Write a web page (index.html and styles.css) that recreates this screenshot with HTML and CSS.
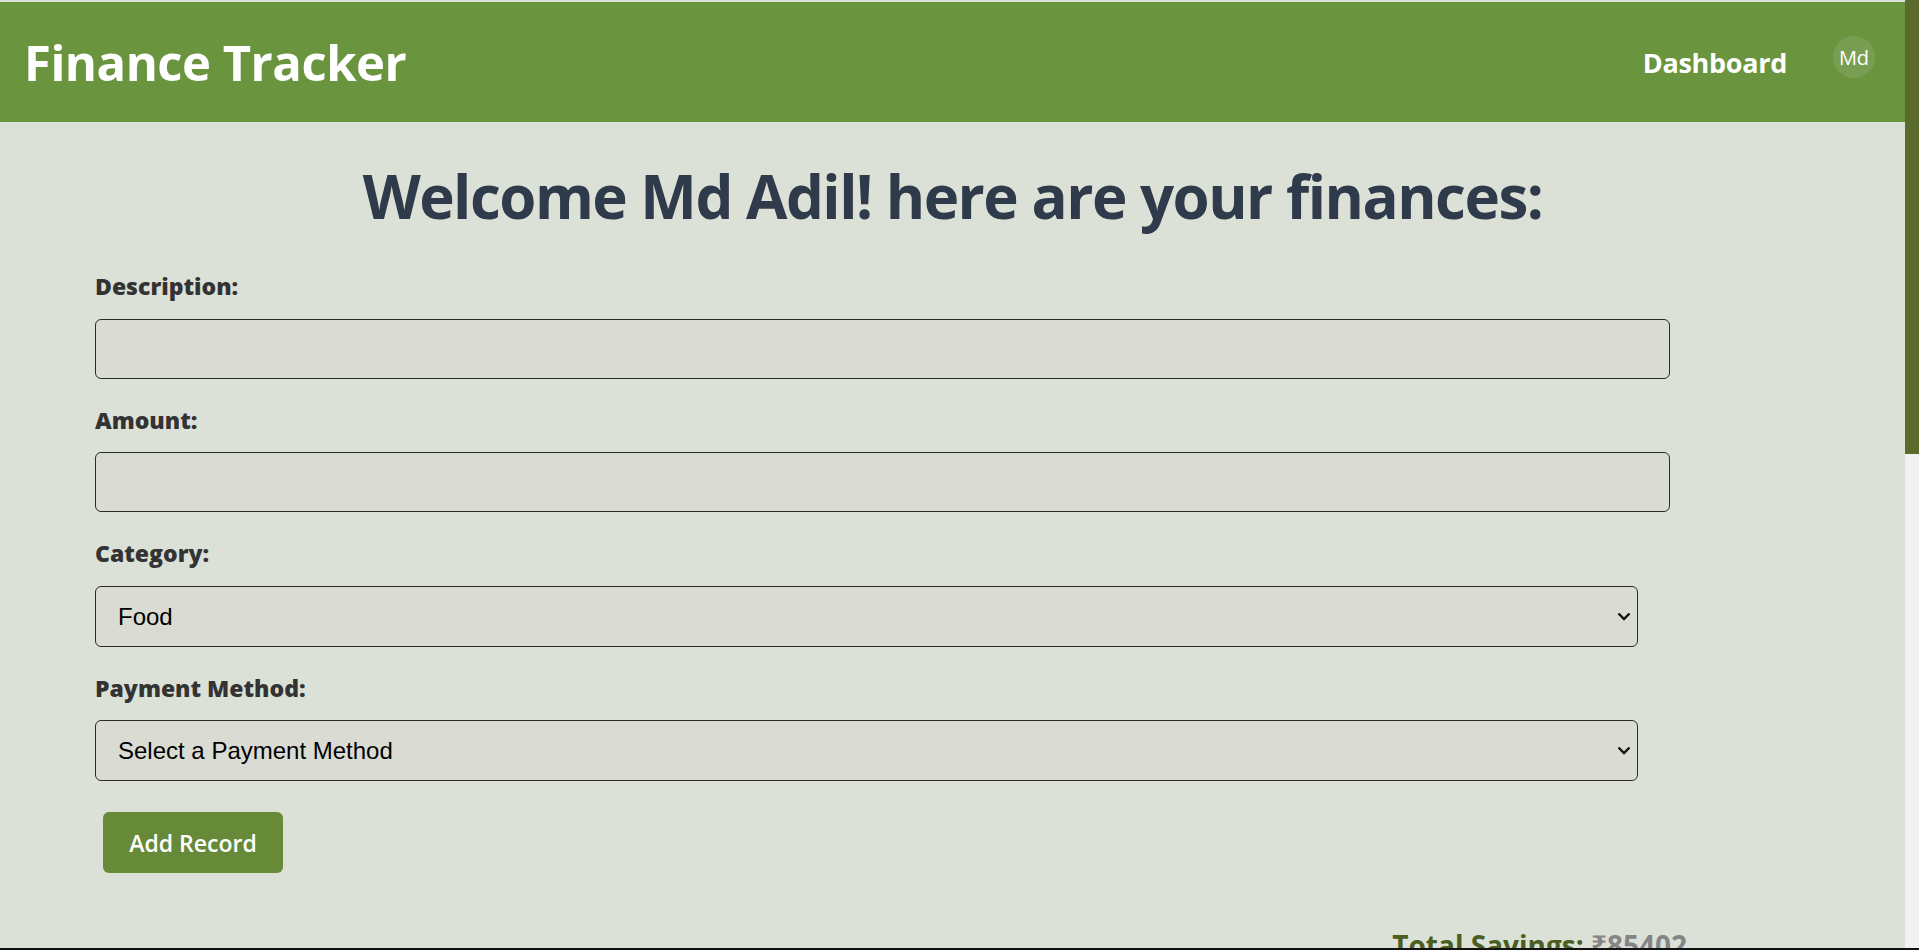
FILE: index.html
```html
<!DOCTYPE html>
<html lang="en">
<head>
<meta charset="utf-8">
<title>Finance Tracker</title>
<link rel="stylesheet" href="styles.css">
</head>
<body>
<header class="topbar">
  <h1 class="brand">Finance Tracker</h1>
  <nav class="nav">
    <a class="nav-link" href="#">Dashboard</a>
    <div class="avatar">Md</div>
  </nav>
</header>
<main class="page">
  <h2 class="welcome">Welcome Md Adil! here are your finances:</h2>
  <form class="record-form">
    <div class="field">
      <label class="field-label" for="desc">Description:</label>
      <input class="field-input" id="desc" type="text">
    </div>
    <div class="field">
      <label class="field-label" for="amount">Amount:</label>
      <input class="field-input" id="amount" type="text">
    </div>
    <div class="field">
      <label class="field-label" for="cat">Category:</label>
      <div class="select-wrap">
        <select class="field-select" id="cat">
          <option>Food</option>
          <option>Rent</option>
          <option>Salary</option>
          <option>Utilities</option>
          <option>Entertainment</option>
          <option>Other</option>
        </select>
        <svg class="chevron" width="14" height="9" viewBox="0 0 14 9" aria-hidden="true"><path d="M1.5 1.5 L7 7 L12.5 1.5" fill="none" stroke="#111" stroke-width="2.4"/></svg>
      </div>
    </div>
    <div class="field">
      <label class="field-label" for="pay">Payment Method:</label>
      <div class="select-wrap">
        <select class="field-select" id="pay">
          <option>Select a Payment Method</option>
          <option>Cash</option>
          <option>Credit Card</option>
          <option>Bank Transfer</option>
        </select>
        <svg class="chevron" width="14" height="9" viewBox="0 0 14 9" aria-hidden="true"><path d="M1.5 1.5 L7 7 L12.5 1.5" fill="none" stroke="#111" stroke-width="2.4"/></svg>
      </div>
    </div>
    <button class="btn" type="button">Add Record</button>
  </form>
  <section class="summary">
    <p class="savings">Total Savings: <span class="savings-value">₹85402</span></p>
  </section>
</main>
<div class="scrollbar"><div class="scrollbar-thumb"></div></div>
<div class="frame-edge"></div>
</body>
</html>
```

FILE: styles.css
```css
html {
  background: #dce1d8;
}
body {
  margin: 0 14px 0 0;
  padding-top: 2px;
  background: #dce1d8;
  font-family: "Open Sans", "Noto Sans", sans-serif;
}
.topbar {
  height: 120px;
  background: #6a943e;
  display: flex;
  align-items: center;
  justify-content: space-between;
  padding: 0 30px 0 24px;
}
.brand {
  margin: 0;
  color: #fff;
  font-size: 49px;
  font-weight: 700;
  letter-spacing: -0.5px;
  line-height: 1.2;
}
.nav {
  display: flex;
  align-items: center;
  gap: 46px;
}
.nav-link {
  color: #fff;
  text-decoration: none;
  font-size: 27px;
  font-weight: 700;
  letter-spacing: -0.3px;
}
.avatar {
  width: 42px;
  height: 42px;
  border-radius: 50%;
  background: rgba(255, 255, 255, 0.1);
  color: #fff;
  font-size: 20px;
  display: flex;
  align-items: center;
  justify-content: center;
  margin-bottom: 10px;
}
.page {
  min-height: 1860px;
}
.welcome {
  margin: 38px 0 41px;
  text-align: center;
  color: #2f3a4b;
  font-size: 60px;
  font-weight: 700;
  line-height: 1.2;
  letter-spacing: -1.5px;
}
.record-form {
  width: 1543px;
  margin-left: 95px;
}
.field {
  display: flex;
  flex-direction: column;
  align-items: flex-start;
  margin-bottom: 28px;
}
.field-label {
  font-size: 23px;
  font-weight: 800;
  line-height: 1.2;
  color: #333;
  margin-bottom: 18px;
}
.field-input {
  box-sizing: border-box;
  width: 1575px;
  height: 60px;
  border: 1px solid #2b2b2b;
  border-radius: 6px;
  background: #dadcd3;
  padding: 0 16px;
  font-size: 24px;
  font-family: "Liberation Sans", Arial, sans-serif;
}
.select-wrap {
  position: relative;
  width: 1543px;
}
.field-select {
  appearance: none;
  -webkit-appearance: none;
  box-sizing: border-box;
  display: block;
  width: 100%;
  height: 61px;
  border: 1px solid #2b2b2b;
  border-radius: 6px;
  background: #dadcd3;
  padding: 0 40px 0 22px;
  font-size: 24px;
  color: #000;
  font-family: "Liberation Sans", Arial, sans-serif;
}
.chevron {
  position: absolute;
  right: 7px;
  top: 26px;
  pointer-events: none;
}
.btn {
  margin: 3px 0 0 8px;
  width: 180px;
  height: 61px;
  border: none;
  border-radius: 6px;
  background: #678a38;
  color: #fff;
  font-family: "Open Sans", sans-serif;
  font-size: 23px;
  font-weight: 600;
  cursor: pointer;
}
.summary {
  display: flex;
  justify-content: flex-end;
  padding-right: 218px;
  margin-top: 56px;
}
.savings {
  margin: 0;
  font-size: 28px;
  font-weight: 700;
  line-height: 1.2;
  color: #4b5e22;
}
.savings-value {
  color: #858585;
}
.scrollbar {
  position: fixed;
  top: 0;
  right: 0;
  width: 14px;
  height: 100%;
  background: #f1f1f1;
}
.scrollbar-thumb {
  height: 454px;
  background: #5b6b2c;
}
.frame-edge {
  position: fixed;
  left: 0;
  right: 0;
  bottom: 0;
  height: 2px;
  background: #111;
}
```
